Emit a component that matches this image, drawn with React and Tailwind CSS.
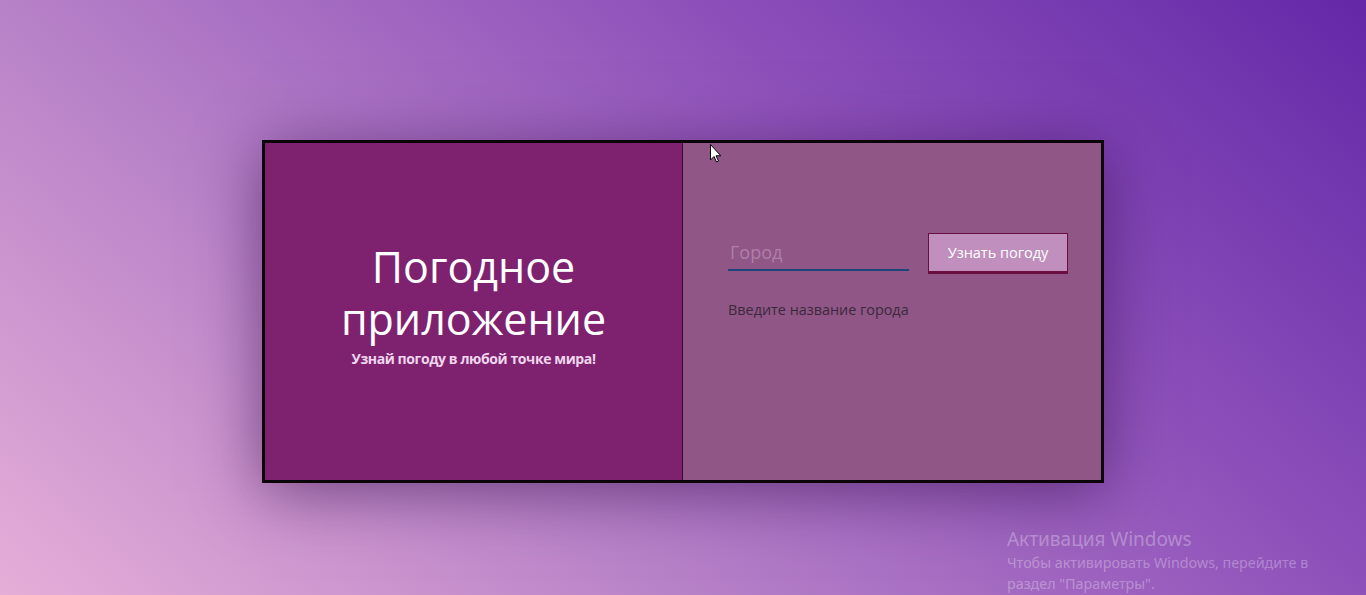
import React from "react";

export default function App() {
  return (
    <div
      className="relative h-[595px] w-full overflow-hidden bg-[linear-gradient(41deg,#e5aed8_0%,#b882c8_33%,#8d50ba_67%,#6428a8_100%)]"
      style={{ fontFamily: '"Open Sans", "Noto Sans", sans-serif' }}
    >
      <div className="flex justify-center pt-[140px]">
        <div className="flex h-[343px] w-[842px] border-[3px] border-[#0b0509] shadow-[0_10px_60px_rgba(50,10,70,0.55)]">
          <div className="flex w-[418px] flex-col items-center justify-center border-r border-[#2c1030] bg-[#7e2270] pb-[14px] text-center">
            <h1 className="text-[43px] font-normal leading-[52px] text-white">
              <div>Погодное</div>
              <div>приложение</div>
            </h1>
            <p className="mt-[4px] text-[14px] font-bold leading-[20px] tracking-[-0.4px] text-[#f0d6ec]">
              Узнай погоду в любой точке мира!
            </p>
          </div>
          <div className="flex-1 bg-[#8f5686] pl-[45px] pt-[90px]">
            <div className="flex items-start">
              <div className="flex h-[38px] w-[181px] items-end border-b-2 border-[#1f4478] pb-[4px] pl-[2px]">
                <span className="text-[18px] leading-[26px] text-[#b07fa9]">Город</span>
              </div>
              <button className="ml-[19px] h-[41px] w-[140px] border border-b-[3px] border-[#6a0e42] bg-[#c08fbd] text-[14.5px] text-white">
                Узнать погоду
              </button>
            </div>
            <p className="mt-[26px] text-[14.4px] leading-[20px] text-[#3b2a3c]">
              Введите название города
            </p>
          </div>
        </div>
      </div>

      <div
        className="absolute left-[1007px] top-[526px] text-[#ffffff]/30"
        style={{ fontFamily: '"Noto Sans", "Open Sans", sans-serif' }}
      >
        <div className="text-[19px] leading-[26px]">Активация Windows</div>
        <div className="text-[14.3px] leading-[21px]">Чтобы активировать Windows, перейдите в</div>
        <div className="text-[14.3px] leading-[21px]">раздел "Параметры".</div>
      </div>

      <svg className="absolute left-[710px] top-[144px]" width="12" height="19" viewBox="0 0 12 19">
        <path d="M0.5 0.5 L0.5 16 L4 12.5 L6.5 18 L8.5 17 L6 11.8 L10.8 11.8 Z" fill="#fff" stroke="#000" strokeWidth="1" />
      </svg>
    </div>
  );
}
